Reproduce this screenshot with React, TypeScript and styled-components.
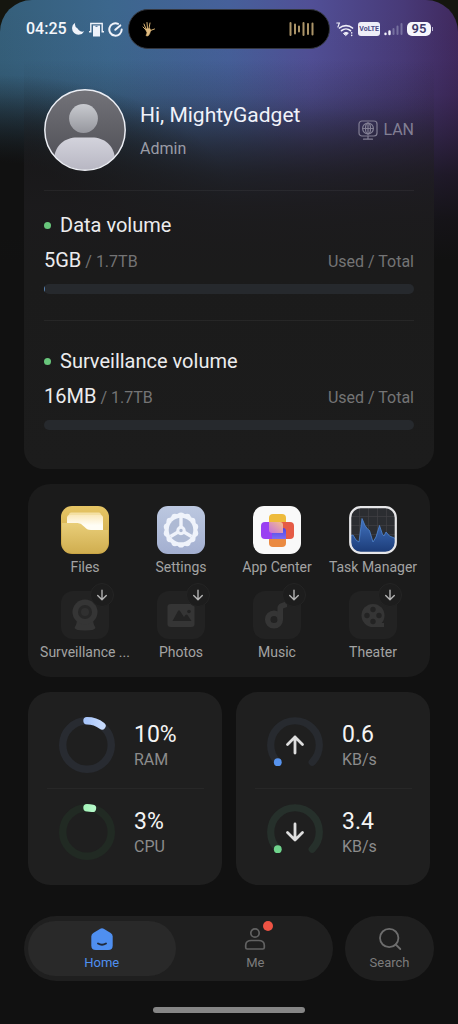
import React from "react";
import styled, { createGlobalStyle } from "styled-components";

const GlobalStyle = createGlobalStyle`
  *, *::before, *::after { box-sizing: border-box; }
  body {
    margin: 0;
    background: #15160f;
    font-family: Roboto, "Liberation Sans", sans-serif;
    color: #ececee;
  }
  button {
    font: inherit;
    color: inherit;
    background: none;
    border: 0;
    padding: 0;
    cursor: pointer;
  }
  h1, h2, p { margin: 0; font-weight: 400; }
  svg { display: block; flex-shrink: 0; }
`;

const Screen = styled.div`
  display: flex;
  flex-direction: column;
  min-height: 100vh;
  border-radius: 32px 32px 0 0;
  background:
    linear-gradient(to bottom, rgba(17, 17, 17, 0) 0, rgba(17, 17, 17, 0.02) 60px, rgba(17, 17, 17, 0.12) 95px, rgba(17, 17, 17, 0.4) 135px, rgba(17, 17, 17, 0.72) 175px, rgba(17, 17, 17, 0.92) 220px, #111 260px),
    radial-gradient(ellipse 230px 125px at 0 200px, #111 30%, rgba(17, 17, 17, 0) 100%),
    linear-gradient(to right, #355f7a 0, #3c678d 24%, #46609a 50%, #514f96 68%, #483a78 88%, #40295e 100%);
  background-color: #111;
`;

/* Status bar */

const StatusBar = styled.div`
  display: grid;
  grid-template-columns: 1fr auto 1fr;
  align-items: center;
  height: 58px;
`;

const StatusSide = styled.div<{ $end?: boolean }>`
  display: flex;
  align-items: center;
  justify-content: ${(p) => (p.$end ? "flex-end" : "flex-start")};
  gap: 4px;
  padding: ${(p) => (p.$end ? "0 27px 0 0" : "0 0 0 26px")};
`;

const Clock = styled.time`
  font-size: 16px;
  line-height: 20px;
  font-weight: 500;
  color: #f4f6fb;
`;

const Island = styled.div`
  display: flex;
  align-items: center;
  justify-content: space-between;
  width: 202px;
  height: 40px;
  padding: 0 14px 0 12px;
  border: 1px solid #34373f;
  border-radius: 20px;
  background: #000;
`;

const VolteTag = styled.span`
  padding: 0 1px;
  border-radius: 3px;
  background: #eeeef8;
  color: #4b4a86;
  font-size: 7px;
  line-height: 14px;
  font-weight: 700;
  white-space: nowrap;
`;

const Battery = styled.span`
  position: relative;
  width: 24px;
  border-radius: 5px;
  background: #f6f6fc;
  color: #3d3868;
  font-size: 13px;
  line-height: 14px;
  font-weight: 600;
  text-align: center;

  &::after {
    content: "";
    position: absolute;
    top: 5px;
    right: -2px;
    width: 1px;
    height: 4px;
    background: #b9b5d2;
  }
`;

/* Overview panel */

const Overview = styled.section`
  margin: 0 24px;
  padding: 31px 20px 0;
  border-radius: 0 0 20px 20px;
  background: linear-gradient(to bottom, rgba(32, 31, 34, 0) 0, rgba(32, 31, 34, 0.1) 50px, rgba(32, 31, 34, 0.5) 100px, rgba(29, 28, 30, 0.86) 150px, #1b1b1b 220px, #1c1c1c 100%);
`;

const Profile = styled.header`
  display: flex;
  align-items: center;
  padding-bottom: 19px;
`;

const ProfileText = styled.div`
  flex: 1;
  padding: 4px 0 0 14px;
`;

const Greeting = styled.h1`
  font-size: 21px;
  line-height: 34px;
  color: #f0f2fa;
`;

const Role = styled.p`
  font-size: 16px;
  line-height: 34px;
  color: #9a9ca6;
`;

const Connection = styled.button`
  display: flex;
  align-items: center;
  gap: 5px;
  font-size: 16px;
  line-height: 20px;
  color: #827f94;
`;

const Volume = styled.section<{ $last?: boolean }>`
  padding: ${(p) => (p.$last ? "26px 0 39px" : "20px 0 26px")};
  border-top: 1px solid rgba(255, 255, 255, 0.05);
`;

const VolumeTitle = styled.h2`
  display: flex;
  align-items: center;
  gap: 9px;
  font-size: 20px;
  line-height: 28px;

  &::before {
    content: "";
    width: 7px;
    height: 7px;
    border-radius: 50%;
    background: #68c67b;
  }
`;

const Usage = styled.div`
  display: flex;
  justify-content: space-between;
  align-items: baseline;
  height: 28px;
  margin: 7px 0 10px;
  font-size: 16px;
  line-height: 28px;
  color: #747475;
`;

const Used = styled.span`
  font-size: 20px;
  color: #ececee;
`;

const Track = styled.div`
  height: 10px;
  border-radius: 5px;
  background: #26292d;
  overflow: hidden;
`;

const Fill = styled.div`
  height: 100%;
  background: #5b86b8;
`;

/* Apps */

const Apps = styled.section`
  display: grid;
  grid-template-columns: repeat(4, 1fr);
  row-gap: 14px;
  margin: 15px 28px 0;
  padding: 22px 9px 15px;
  border-radius: 22px;
  background: #1b1b1b;
`;

const AppButton = styled.button`
  display: flex;
  flex-direction: column;
  align-items: center;
  gap: 3px;
  font-size: 14px;
  line-height: 20px;
  color: #a3a3a3;
  white-space: nowrap;
`;

const Tile = styled.span`
  position: relative;
  width: 48px;
  height: 48px;
`;

const InstallBadge = styled.span`
  position: absolute;
  top: -8px;
  right: -5px;
  display: grid;
  place-items: center;
  width: 24px;
  height: 24px;
  border-radius: 50%;
  border: 1px solid #242424;
  background: #1d1d1d;
  color: #b4b4b4;
`;

/* Metrics */

const Metrics = styled.div`
  display: grid;
  grid-template-columns: 1fr 1fr;
  gap: 14px;
  margin: 15px 28px 31px;
`;

const MetricCard = styled.section`
  padding: 10px 18px 10px 19px;
  border-radius: 22px;
  background: #1f1f1f;
`;

const Metric = styled.div`
  display: flex;
  align-items: center;
  gap: 19px;
  padding: 15px 12px;

  & + & {
    border-top: 1px solid #272727;
  }
`;

const MetricText = styled.div`
  padding-top: 2px;
`;

const MetricValue = styled.p`
  font-size: 23px;
  line-height: 28px;
  color: #f4f4f4;
`;

const MetricLabel = styled.p`
  font-size: 16px;
  line-height: 22px;
  color: #8c8c8c;
`;

/* Bottom navigation */

const BottomNav = styled.nav`
  display: flex;
  gap: 12px;
  margin: auto 24px 0;
`;

const Tabs = styled.div`
  flex: 301;
  display: grid;
  grid-template-columns: 1fr 1fr;
  gap: 6px;
  padding: 5px 4px;
  border-radius: 33px;
  background: #1f1f1f;
`;

const Tab = styled.button<{ $active?: boolean }>`
  display: flex;
  flex-direction: column;
  align-items: center;
  justify-content: center;
  gap: 3px;
  height: 55px;
  padding-top: 1px;
  border-radius: 28px;
  background: ${(p) => (p.$active ? "#292929" : "transparent")};
  color: ${(p) => (p.$active ? "#4f8ff0" : "#7c7c7c")};
  font-size: 13px;
  line-height: 18px;
`;

const SearchPill = styled.div`
  flex: 89;
  padding: 5px 0;
  border-radius: 33px;
  background: #1f1f1f;
  display: grid;
`;

const IconWrap = styled.span`
  position: relative;
`;

const AlertDot = styled.span`
  position: absolute;
  top: -6px;
  right: -6px;
  width: 10px;
  height: 10px;
  border-radius: 50%;
  background: #ee5344;
`;

const HomeIndicator = styled.div`
  width: 33.4%;
  height: 6px;
  margin: 26px auto 11px;
  border-radius: 3px;
  background: #868686;
`;

/* Drawings */

const MoonIcon = () => (
  <svg width="14" height="14" viewBox="0 0 14 14">
    <path d="M4.200 .8A6.400 6.400 0 1 0 13.200 9.200 5 5 0 0 1 6.600 6.600 5.200 5.200 0 0 1 4.200 .8z" fill="#f0f3fa" />
  </svg>
);

const VibrateIcon = () => (
  <svg width="15" height="15" viewBox="0 0 15 15" fill="none" stroke="#eef2fa">
    <path d="M4 14.500V3.500h7v11z" fill="#eef2fa" stroke="none" />
    <path d="M0 9.800h1.800V1.500h11.400v8.300H15" strokeWidth="1.400" />
    <path d="M6.500 4.300h2" stroke="#426a94" />
  </svg>
);

const DialIcon = () => (
  <svg width="15" height="15" viewBox="0 0 15 15" fill="none" stroke="#f0f3fa" strokeWidth="2" strokeLinecap="round">
    <path d="M10 1.800A6.200 6.200 0 1 0 13.700 7.500" />
    <path d="M7.300 7.800 12.300 3.400" />
  </svg>
);

const HandIcon = () => (
  <svg width="16" height="18" viewBox="0 0 16 18" fill="none" stroke="#d9b374" strokeLinecap="round" strokeLinejoin="round">
    <path d="M4.500 9.500 2 7M5 9 3 4M6.500 8.500 6 2.500M8 8.500 9 3M9.500 10.500l4-1.500" strokeWidth="1" />
    <path d="M4.500 9l4.500-.5.8 2L8.500 14l-1.500 2-2-.3L6 13z" fill="#e0bb80" strokeWidth=".6" />
  </svg>
);

const SoundBars = () => (
  <svg width="26" height="16" viewBox="0 0 26 16" stroke="#ab9468" strokeWidth="2" strokeLinecap="round">
    <path d="M1.500 2v12M6 3.500v9M10 5.500v5M14.500 2v12M19 3v10M23.500 2.500v11" />
  </svg>
);

const WifiIcon = () => (
  <svg width="18" height="15" viewBox="0 0 18 15" fill="none" stroke="#eeeef8" strokeLinecap="round">
    <path d="M.8 1h2.600L1.900 5" strokeWidth="1.100" />
    <path d="M3.500 6c3.500-3.300 9.500-3.300 13 0" strokeWidth="1.700" />
    <path d="M5.500 8.700c2.600-2.300 6.400-2.300 9 0" strokeWidth="1.700" />
    <path d="M7.700 11.200c1.400-1.100 3.200-1.100 4.600 0L10 13.300z" fill="#eeeef8" strokeWidth="1" />
    <path d="M15.700 10.800v.1M15.700 13.300v.1" strokeWidth="1.500" />
  </svg>
);

const SignalIcon = () => (
  <svg width="19" height="14" viewBox="0 0 19 14" strokeWidth="2" strokeLinecap="round">
    <path d="M1.500 11.700V12M5.500 9.500V12" stroke="#f2f2fb" strokeWidth="2.400" />
    <path d="M9.500 7V12M13.500 4.500V12M17.500 2V12" stroke="#77719f" />
  </svg>
);

const Avatar = () => (
  <svg width="82" height="82" viewBox="0 0 82 82" role="img" aria-label="User avatar">
    <defs>
      <linearGradient id="avatarBack" x1="0" y1="0" x2="0" y2="1">
        <stop offset="0" stopColor="#737379" />
        <stop offset="1" stopColor="#4c4c53" />
      </linearGradient>
      <linearGradient id="avatarHead" x1="0" y1="0" x2="0" y2="1">
        <stop offset="0" stopColor="#c8cacf" />
        <stop offset="1" stopColor="#96979e" />
      </linearGradient>
      <linearGradient id="avatarBody" x1="0" y1="0" x2="0" y2="1">
        <stop offset="0" stopColor="#d3d3dc" />
        <stop offset="1" stopColor="#b7b6c2" />
      </linearGradient>
      <clipPath id="avatarClip">
        <circle cx="41" cy="41" r="40" />
      </clipPath>
    </defs>
    <circle cx="41" cy="41" r="40" fill="url(#avatarBack)" />
    <circle cx="39.500" cy="29.500" r="14.400" fill="url(#avatarHead)" />
    <path clipPath="url(#avatarClip)" d="M10 82V70c1-14 11-21.500 23-21.500h15C60 48.500 70 56 71 70v12z" fill="url(#avatarBody)" />
    <circle cx="41" cy="41" r="40.200" fill="none" stroke="#eceef4" strokeWidth="1.500" />
  </svg>
);

const LanIcon = () => (
  <svg width="20" height="20" viewBox="0 0 20 20" fill="none" stroke="currentColor" strokeWidth="1.200" strokeLinecap="round">
    <rect x="1" y="1" width="18" height="15" rx="3" />
    <circle cx="10" cy="8.500" r="5.400" />
    <ellipse cx="10" cy="8.500" rx="2.500" ry="5.400" />
    <path d="M4.600 8.500h10.800M10 3.100v10.800M10 16v3M5.500 19.200h9" />
  </svg>
);

const FilesArt = () => (
  <svg width="48" height="48" viewBox="0 0 48 48">
    <defs>
      <linearGradient id="folderBack" x1="0" y1="0" x2="0" y2="1">
        <stop offset="0" stopColor="#e6c565" />
        <stop offset="1" stopColor="#c9a444" />
      </linearGradient>
      <linearGradient id="folderFront" x1="0" y1="0" x2="0" y2="1">
        <stop offset="0" stopColor="#e9ce79" />
        <stop offset="1" stopColor="#d0ae50" />
      </linearGradient>
      <linearGradient id="folderPaper" x1="0" y1="0" x2="0" y2="1">
        <stop offset="0" stopColor="#fbe9bb" />
        <stop offset=".6" stopColor="#fffdf5" />
      </linearGradient>
    </defs>
    <rect width="48" height="48" rx="11" fill="url(#folderBack)" />
    <path d="M10 6.500h28q1.500 0 1.800 1.500L42 12v12H6V12l2.200-4Q8.500 6.500 10 6.500z" fill="#f4e0a4" />
    <path d="M9 9h30q3 0 3 3v14H6V12q0-3 3-3z" fill="url(#folderPaper)" />
    <path d="M1 17h14c4 0 5.500 1 8 3.500 2.500 2.500 3.500 3.500 7 3.500h17v13q0 10-10 10H11Q1 47 1 37z" fill="url(#folderFront)" />
  </svg>
);

const lobes = Array.from({ length: 14 }, (_, i) => (i * 2 * Math.PI) / 14);

const SettingsArt = () => (
  <svg width="48" height="48" viewBox="0 0 48 48">
    <defs>
      <linearGradient id="settingsBack" x1="0" y1="0" x2="0" y2="1">
        <stop offset="0" stopColor="#bcc8e0" />
        <stop offset="1" stopColor="#a3afd0" />
      </linearGradient>
    </defs>
    <rect width="48" height="48" rx="11" fill="url(#settingsBack)" />
    <g fill="#eff3fb">
      <circle cx="24" cy="24" r="16.400" />
      {lobes.map((a) => (
        <circle key={a} cx={24 + 14.2 * Math.sin(a)} cy={24 - 14.2 * Math.cos(a)} r="3.400" />
      ))}
    </g>
    <circle cx="24" cy="24" r="12.300" fill="#aebad4" />
    <path d="M24 11v10M13.500 30.500l8-4.800M34.500 30.500l-8-4.800" stroke="#eff3fb" strokeWidth="3.400" />
    <circle cx="24" cy="24.500" r="3.200" fill="#aebad4" stroke="#eff3fb" strokeWidth="3" />
  </svg>
);

const AppCenterArt = () => (
  <svg width="48" height="48" viewBox="0 0 48 48">
    <defs>
      <linearGradient id="centerMix" x1="0" y1="1" x2="1" y2="0">
        <stop offset="0" stopColor="#c470dd" />
        <stop offset="1" stopColor="#f6c08a" />
      </linearGradient>
      <linearGradient id="centerBlue" x1="0" y1="0" x2="0" y2="1">
        <stop offset="0" stopColor="#4b45e8" />
        <stop offset="1" stopColor="#7f6df0" />
      </linearGradient>
    </defs>
    <rect width="48" height="48" rx="11" fill="#f9f9f9" />
    <rect x="16" y="8" width="17" height="18" rx="4" fill="#eebb3c" />
    <rect x="16" y="24" width="17" height="17" rx="4" fill="#ea8a42" />
    <rect x="24" y="16" width="17" height="17" rx="4" fill="#e55b46" />
    <rect x="8" y="16" width="21" height="17" rx="4" fill="#9a40f2" />
    <path d="M19 22h11q3 0 3 3v8H19z" fill="url(#centerBlue)" />
    <path d="M16 16h11q3 0 3 3v8H19q-3 0-3-3z" fill="url(#centerMix)" />
  </svg>
);

const TaskManagerArt = () => (
  <svg width="48" height="48" viewBox="0 0 48 48">
    <defs>
      <linearGradient id="taskFill" x1="0" y1="0" x2="0" y2="1">
        <stop offset="0" stopColor="#4273c0" />
        <stop offset="1" stopColor="#1c3c78" />
      </linearGradient>
    </defs>
    <rect x="1" y="1" width="46" height="46" rx="11" fill="#2b2d31" />
    <path d="M2 10.500h44M2 19.500h44M2 28.500h44M2 37.500h44M10.500 2v44M19.500 2v44M28.500 2v44M37.500 2v44" stroke="#404145" strokeWidth=".7" />
    <path d="M2 29.500l2-.5 3 5 3 2 3-23.500 3 7 2.500 3.500 2 1.500 3.500 11.500 3-5 3.500-11.500 3 9 1.500 1.500 2-4 3.500 4 6 2.500V37q0 9-9 9H11q-9 0-9-9z" fill="url(#taskFill)" />
    <path d="M2 29.500l2-.5 3 5 3 2 3-23.500 3 7 2.500 3.500 2 1.500 3.500 11.500 3-5 3.500-11.500 3 9 1.500 1.500 2-4 3.500 4 6 2.500" fill="none" stroke="#4f86d4" strokeWidth=".8" />
    <rect x="1.200" y="1.200" width="45.600" height="45.600" rx="10.500" fill="none" stroke="#e6e6e8" strokeWidth="2.200" />
  </svg>
);

const DimTile = ({ children }: { children: React.ReactNode }) => (
  <svg width="48" height="48" viewBox="0 0 48 48" fill="#353535">
    <rect width="48" height="48" rx="12" fill="#222" />
    {children}
  </svg>
);

const SurveillanceArt = () => (
  <DimTile>
    <path d="M16 29h16q0 4 2.500 8-1 2.500-10.500 2.500T13.500 37Q16 33 16 29z" />
    <circle cx="24" cy="21" r="12.500" />
    <circle cx="24" cy="21" r="7" fill="#272727" />
    <circle cx="24" cy="21" r="4" fill="#303030" />
  </DimTile>
);

const PhotosArt = () => (
  <DimTile>
    <rect x="10.500" y="13" width="27" height="23" rx="3" />
    <path d="M15.500 30l5.500-10q1-1.500 2 0l4 6 1.500-2q1-1 2 0l4 6z" fill="#232323" />
    <circle cx="32" cy="20.500" r="1.800" fill="#232323" />
  </DimTile>
);

const MusicArt = () => (
  <DimTile>
    <circle cx="21" cy="28.500" r="6.300" fill="none" stroke="#353535" strokeWidth="5.500" />
    <path d="M24.500 28.500V17q0-3 3-4.500l6.500-2.500v6l-4 1.500v11z" />
  </DimTile>
);

const TheaterArt = () => (
  <DimTile>
    <circle cx="24" cy="24.500" r="11.500" />
    <path d="M24 32h11v4H24z" />
    <g fill="#232323">
      <circle cx="24" cy="18.500" r="2.700" />
      <circle cx="18" cy="24.500" r="2.700" />
      <circle cx="30" cy="24.500" r="2.700" />
      <circle cx="24" cy="30.500" r="2.700" />
    </g>
  </DimTile>
);

const DownArrow = () => (
  <svg width="12" height="12" viewBox="0 0 12 12" fill="none" stroke="currentColor" strokeWidth="1.400" strokeLinecap="round" strokeLinejoin="round">
    <path d="M6 1.200v9.300M1.700 6.500 6 10.700l4.300-4.200" />
  </svg>
);

const RADIUS = 24.3;

const Ring = ({ degrees, track, from, to, id }: { degrees: number; track: string; from: string; to: string; id: string }) => {
  const a = (degrees * Math.PI) / 180;
  return (
    <svg width="56" height="56" viewBox="0 0 56 56" fill="none" strokeWidth="7.400">
      <defs>
        <linearGradient id={id}>
          <stop offset="0" stopColor={from} />
          <stop offset="1" stopColor={to} />
        </linearGradient>
      </defs>
      <circle cx="28" cy="28" r={RADIUS} stroke={track} />
      <path
        d={`M28 ${28 - RADIUS}A${RADIUS} ${RADIUS} 0 0 1 ${28 + RADIUS * Math.sin(a)} ${28 - RADIUS * Math.cos(a)}`}
        stroke={`url(#${id})`}
        strokeLinecap="round"
      />
    </svg>
  );
};

const Gauge = ({ up, track, dot }: { up?: boolean; track: string; dot: string }) => (
  <svg width="56" height="56" viewBox="0 0 56 56" fill="none" strokeLinecap="round" strokeLinejoin="round">
    <path d="M10.800 45.200A24.300 24.300 0 1 1 45.200 45.200" stroke={track} strokeWidth="7.200" />
    <path
      d={up ? "M28 36V20M20.500 27.500 28 20l7.500 7.500" : "M28 20v16M20.500 28.500 28 36l7.500-7.500"}
      stroke="#dedede"
      strokeWidth="2.800"
    />
    <circle cx="10.800" cy="45.200" r="3.900" fill={dot} />
  </svg>
);

const HomeIcon = () => (
  <svg width="24" height="24" viewBox="0 0 24 24">
    <path d="M10.300 1.700q1.700-1 3.400 0l7 4.300q2 1.300 2 3.500v9q0 4.500-4.500 4.500H5.800Q1.300 23 1.300 18.500v-9q0-2.200 2-3.500z" fill="#4f8ff0" />
    <path d="M8 16.500q4 2.600 8 0" fill="none" stroke="#202a3a" strokeWidth="1.900" strokeLinecap="round" />
  </svg>
);

const MeIcon = () => (
  <svg width="24" height="24" viewBox="0 0 24 24" fill="none" stroke="#626262" strokeWidth="1.700">
    <circle cx="12" cy="6" r="4.200" />
    <path d="M2.700 20.500v-2.300c0-3 2.500-4.700 5.500-4.700h7.600c3 0 5.500 1.700 5.500 4.700v2.300q0 1.500-1.500 1.500H4.200q-1.500 0-1.500-1.500z" />
  </svg>
);

const SearchIcon = () => (
  <svg width="24" height="24" viewBox="0 0 24 24" fill="none" stroke="#6d6d6d" strokeWidth="1.800" strokeLinecap="round">
    <circle cx="11.200" cy="11" r="9.200" />
    <path d="M17.700 17.500 22.300 22" />
  </svg>
);

const apps = [
  { name: "Files", art: <FilesArt /> },
  { name: "Settings", art: <SettingsArt /> },
  { name: "App Center", art: <AppCenterArt /> },
  { name: "Task Manager", art: <TaskManagerArt /> },
  { name: "Surveillance ...", art: <SurveillanceArt />, install: true },
  { name: "Photos", art: <PhotosArt />, install: true },
  { name: "Music", art: <MusicArt />, install: true },
  { name: "Theater", art: <TheaterArt />, install: true },
];

const volumes = [
  { name: "Data volume", used: "5GB", total: "1.7TB", percent: 0.4 },
  { name: "Surveillance volume", used: "16MB", total: "1.7TB", percent: 0 },
];

export default function App() {
  return (
    <>
      <GlobalStyle />
      <Screen>
        <StatusBar>
          <StatusSide>
            <Clock>04:25</Clock>
            <MoonIcon />
            <VibrateIcon />
            <DialIcon />
          </StatusSide>
          <Island>
            <HandIcon />
            <SoundBars />
          </Island>
          <StatusSide $end>
            <WifiIcon />
            <VolteTag>VoLTE</VolteTag>
            <SignalIcon />
            <Battery>95</Battery>
          </StatusSide>
        </StatusBar>

        <main>
          <Overview>
            <Profile>
              <Avatar />
              <ProfileText>
                <Greeting>Hi, MightyGadget</Greeting>
                <Role>Admin</Role>
              </ProfileText>
              <Connection>
                <LanIcon />
                LAN
              </Connection>
            </Profile>
            {volumes.map((v, i) => (
              <Volume key={v.name} $last={i === volumes.length - 1}>
                <VolumeTitle>{v.name}</VolumeTitle>
                <Usage>
                  <span>
                    <Used>{v.used}</Used> / {v.total}
                  </span>
                  <span>Used / Total</span>
                </Usage>
                <Track role="progressbar" aria-label={v.name} aria-valuenow={v.percent} aria-valuemin={0} aria-valuemax={100}>
                  <Fill style={{ width: `${v.percent}%` }} />
                </Track>
              </Volume>
            ))}
          </Overview>

          <Apps>
            {apps.map((app) => (
              <AppButton key={app.name}>
                <Tile>
                  {app.art}
                  {app.install && (
                    <InstallBadge>
                      <DownArrow />
                    </InstallBadge>
                  )}
                </Tile>
                {app.name}
              </AppButton>
            ))}
          </Apps>

          <Metrics>
            <MetricCard>
              <Metric>
                <Ring id="ramArc" degrees={38} track="#282b31" from="#a9c6fa" to="#c6dafc" />
                <MetricText>
                  <MetricValue>10%</MetricValue>
                  <MetricLabel>RAM</MetricLabel>
                </MetricText>
              </Metric>
              <Metric>
                <Ring id="cpuArc" degrees={13} track="#212a23" from="#a6f5bb" to="#b4f8c8" />
                <MetricText>
                  <MetricValue>3%</MetricValue>
                  <MetricLabel>CPU</MetricLabel>
                </MetricText>
              </Metric>
            </MetricCard>
            <MetricCard>
              <Metric>
                <Gauge up track="#272a2f" dot="#5793ee" />
                <MetricText>
                  <MetricValue>0.6</MetricValue>
                  <MetricLabel>KB/s</MetricLabel>
                </MetricText>
              </Metric>
              <Metric>
                <Gauge track="#26302b" dot="#6fd48c" />
                <MetricText>
                  <MetricValue>3.4</MetricValue>
                  <MetricLabel>KB/s</MetricLabel>
                </MetricText>
              </Metric>
            </MetricCard>
          </Metrics>
        </main>

        <BottomNav>
          <Tabs>
            <Tab $active aria-current="page">
              <HomeIcon />
              Home
            </Tab>
            <Tab>
              <IconWrap>
                <MeIcon />
                <AlertDot />
              </IconWrap>
              Me
            </Tab>
          </Tabs>
          <SearchPill>
            <Tab>
              <SearchIcon />
              Search
            </Tab>
          </SearchPill>
        </BottomNav>
        <HomeIndicator />
      </Screen>
    </>
  );
}
